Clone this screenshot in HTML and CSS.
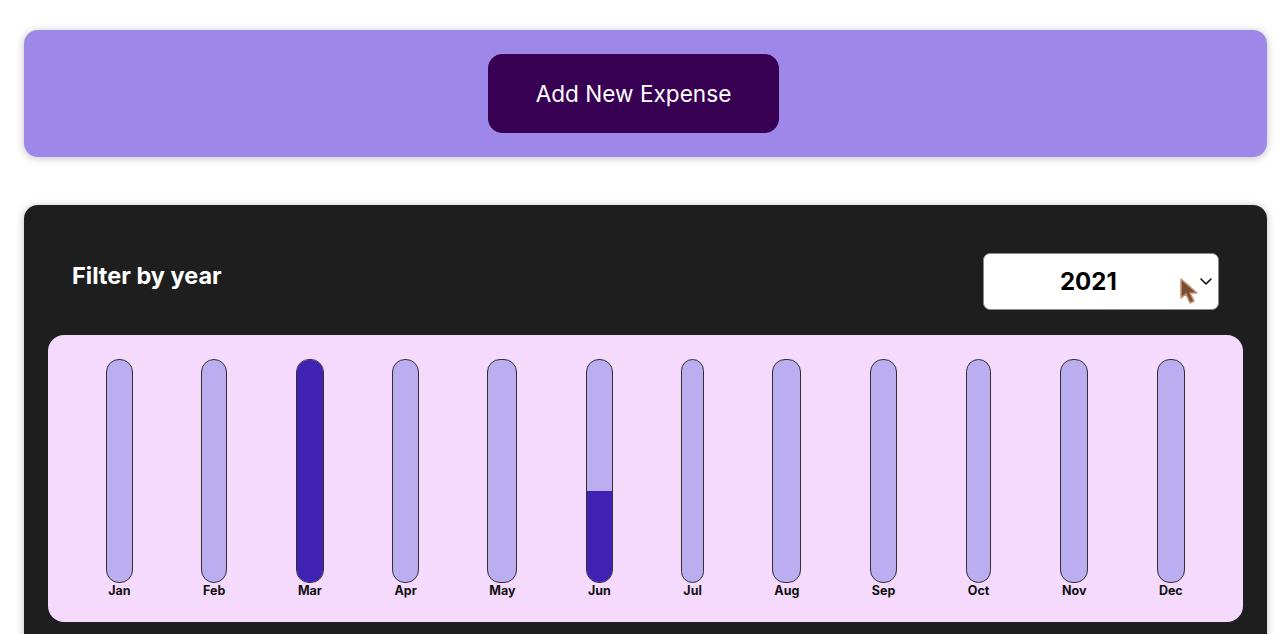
FILE: index.html
```html
<!DOCTYPE html>
<html lang="en">
<head>
<meta charset="utf-8">
<title>Expenses</title>
<link rel="stylesheet" href="styles.css">
</head>
<body>
<div class="page">
  <div class="new-expense">
    <button class="add-btn" type="button">Add New Expense</button>
  </div>
  <div class="expenses">
    <div class="filter">
      <div class="filter-control">
        <label class="filter-label" for="year">Filter by year</label>
        <div class="select-wrap">
          <select id="year" class="year-select">
            <option>2021</option>
            <option>2022</option>
            <option>2020</option>
            <option>2019</option>
          </select>
          <svg class="chevron" width="12" height="7" viewBox="0 0 12 7"><path d="M1 1 L6 6 L11 1" fill="none" stroke="#111" stroke-width="1.6" stroke-linecap="round" stroke-linejoin="round"/></svg>
          <svg class="cursor" width="22" height="30" viewBox="0 0 22 30"><path d="M2 2 L2 21 L7 17 L11 26 L15 24 L11 16 L18 16 Z" fill="#7a4d36" stroke="#c89274" stroke-width="1.5" stroke-linejoin="round"/></svg>
        </div>
      </div>
    </div>
    <div class="chart">
      <div class="chart-bar"><div class="bar-inner"><div class="bar-fill" style="height:0%"></div></div><div class="bar-label">Jan</div></div>
      <div class="chart-bar"><div class="bar-inner"><div class="bar-fill" style="height:0%"></div></div><div class="bar-label">Feb</div></div>
      <div class="chart-bar"><div class="bar-inner"><div class="bar-fill" style="height:100%"></div></div><div class="bar-label">Mar</div></div>
      <div class="chart-bar"><div class="bar-inner"><div class="bar-fill" style="height:0%"></div></div><div class="bar-label">Apr</div></div>
      <div class="chart-bar"><div class="bar-inner"><div class="bar-fill" style="height:0%"></div></div><div class="bar-label">May</div></div>
      <div class="chart-bar"><div class="bar-inner"><div class="bar-fill" style="height:41%"></div></div><div class="bar-label">Jun</div></div>
      <div class="chart-bar"><div class="bar-inner"><div class="bar-fill" style="height:0%"></div></div><div class="bar-label">Jul</div></div>
      <div class="chart-bar"><div class="bar-inner"><div class="bar-fill" style="height:0%"></div></div><div class="bar-label">Aug</div></div>
      <div class="chart-bar"><div class="bar-inner"><div class="bar-fill" style="height:0%"></div></div><div class="bar-label">Sep</div></div>
      <div class="chart-bar"><div class="bar-inner"><div class="bar-fill" style="height:0%"></div></div><div class="bar-label">Oct</div></div>
      <div class="chart-bar"><div class="bar-inner"><div class="bar-fill" style="height:0%"></div></div><div class="bar-label">Nov</div></div>
      <div class="chart-bar"><div class="bar-inner"><div class="bar-fill" style="height:0%"></div></div><div class="bar-label">Dec</div></div>
    </div>
  </div>
</div>
</body>
</html>
```

FILE: styles.css
```css
* { box-sizing: border-box; }

html, body {
  margin: 0;
  background: #ffffff;
  font-family: Inter, "Noto Sans", "Liberation Sans", sans-serif;
}

.page {
  padding: 30px 13px 0 24px;
}

.new-expense {
  background-color: #9d88ea;
  padding: 24px;
  border-radius: 14px;
  display: flex;
  justify-content: center;
  box-shadow: 0 1px 8px rgba(0, 0, 0, 0.25);
}

.add-btn {
  font-family: inherit;
  font-size: 22.6px;
  font-weight: 400;
  line-height: 29px;
  padding: 24px 47px;
  border: 1px solid #380052;
  background-color: #380052;
  color: #ffffff;
  border-radius: 14px;
  margin-right: 24px;
  cursor: pointer;
}

.expenses {
  margin-top: 48px;
  background-color: #1e1e1e;
  padding: 24px;
  border-radius: 14px;
  box-shadow: 0 1px 8px rgba(0, 0, 0, 0.25);
  height: 460px;
}

.filter {
  color: #ffffff;
  padding: 24px 24px 25px;
}

.filter-control {
  display: flex;
  align-items: center;
  justify-content: space-between;
}

.filter-label {
  font-weight: 700;
  font-size: 23.5px;
  line-height: 28px;
  margin-bottom: 12px;
}

.select-wrap {
  position: relative;
  display: flex;
}

.year-select {
  appearance: none;
  -webkit-appearance: none;
  font-family: inherit;
  font-size: 24px;
  font-weight: 700;
  line-height: 31px;
  height: 57px;
  width: 236px;
  padding: 12px 0 12px 76px;
  border: 1px solid #8a8a8a;
  border-radius: 7px;
  background: #ffffff;
  color: #000000;
}

.chevron {
  position: absolute;
  right: 7px;
  top: 25px;
  pointer-events: none;
}

.cursor {
  position: absolute;
  left: 196px;
  top: 24px;
  pointer-events: none;
}

.chart {
  height: 287px;
  padding: 24px;
  border-radius: 16px;
  background-color: #f5dafe;
  display: flex;
  justify-content: space-around;
  text-align: center;
}

.chart-bar {
  height: 100%;
  display: flex;
  flex-direction: column;
  align-items: center;
}

.bar-inner {
  box-sizing: content-box;
  flex: 1;
  width: 100%;
  border: 1px solid #313131;
  border-radius: 13px;
  background-color: #baaef0;
  overflow: hidden;
  display: flex;
  flex-direction: column;
  justify-content: flex-end;
}

.bar-fill {
  background-color: #3f22b1;
  width: 100%;
}

.bar-label {
  font-weight: 700;
  font-size: 12.5px;
  line-height: 15px;
  padding: 0 1px;
  color: #111111;
}
```
